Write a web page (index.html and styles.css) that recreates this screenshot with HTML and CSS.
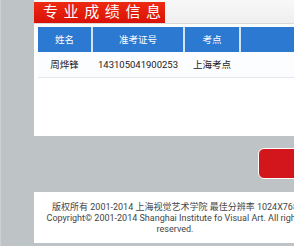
FILE: index.html
```html
<!DOCTYPE html>
<html lang="zh-CN">
<head>
<meta charset="utf-8">
<title>专业成绩信息</title>
<link rel="stylesheet" href="styles.css">
</head>
<body>
<div class="page">
  <div class="panel">
    <div class="tabbar"><div class="tab">专业成绩信息</div></div>
    <div class="grid">
      <div class="row head">
        <div class="cell">姓名</div>
        <div class="cell">准考证号</div>
        <div class="cell">考点</div>
        <div class="cell"></div>
      </div>
      <div class="row data">
        <div class="cell">周烨锋</div>
        <div class="cell">143105041900253</div>
        <div class="cell">上海考点</div>
        <div class="cell"></div>
      </div>
    </div>
  </div>
  <div class="btnrow"><div class="btn"></div></div>
  <div class="footer">
    <p>版权所有 2001-2014 上海视觉艺术学院 最佳分辨率 1024X768</p>
    <p>Copyright© 2001-2014 Shanghai Institute fo Visual Art. All rights reserved.</p>
  </div>
</div>
</body>
</html>
```
FILE: styles.css
```css
html, body {
  margin: 0;
  padding: 0;
  overflow: hidden;
}
body {
  background: #bec3c5;
  border-left: 1px solid #cdd1d3;
  font-family: Roboto, "Noto Sans CJK SC", sans-serif;
  height: 246px;
}
.page {
  margin-left: 33px;
  width: 282px;
}
.panel {
  background: #fff;
  height: 136px;
}
.tabbar {
  height: 21px;
  padding-top: 2px;
  background: linear-gradient(#f8f8f8, #efefef);
  border-bottom: 1px solid #d9d9d9;
}
.tab {
  width: 131px;
  height: 21px;
  box-sizing: border-box;
  padding-left: 9px;
  background: linear-gradient(#ee2a10, #d81208);
  color: #fff;
  font-size: 15px;
  line-height: 21px;
  letter-spacing: 5.6px;
  white-space: nowrap;
}
.grid {
  margin: 3px 4px 0 4px;
}
.row {
  display: grid;
  grid-template-columns: 53px 90px 54px 1fr;
  column-gap: 2px;
  height: 25px;
  font-size: 9.5px;
  text-align: center;
  line-height: 25px;
}
.row.head {
  background: #d4e3f4;
  color: #fff;
}
.row.head .cell {
  background: #2c79d1;
}
.row.data {
  color: #1a1a1a;
  border-bottom: 1px solid #e1e8ef;
  background: #fcfdff;
}
.btnrow {
  padding: 12px 0 13px 224px;
}
.btn {
  width: 70px;
  height: 31px;
  box-sizing: border-box;
  background: #d3161b;
  border: 1px solid #fff;
  border-radius: 6px;
}
.footer {
  background: #fff;
  height: 51px;
  box-sizing: border-box;
  padding: 10px 6px 0;
  text-align: center;
  color: #444;
  font-size: 9px;
  line-height: 11px;
}
.footer p {
  margin: 0;
}
```
